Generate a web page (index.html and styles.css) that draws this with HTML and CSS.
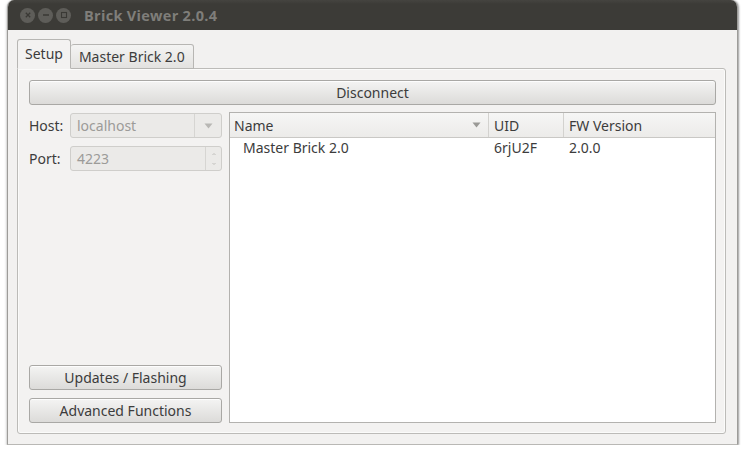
FILE: index.html
```html
<!DOCTYPE html>
<html>
<head>
<meta charset="utf-8">
<link rel="stylesheet" href="styles.css">
</head>
<body>
<div class="window">
  <div class="titlebar">
    <div class="wbtns">
      <span class="wbtn"><svg width="14" height="14" viewBox="0 0 14 14"><path d="M4.8 4.8 L9.2 9.2 M9.2 4.8 L4.8 9.2" stroke="#3a3935" stroke-width="1.3"/></svg></span>
      <span class="wbtn"><svg width="14" height="14" viewBox="0 0 14 14"><path d="M4 7 H10" stroke="#3a3935" stroke-width="1.3"/></svg></span>
      <span class="wbtn"><svg width="14" height="14" viewBox="0 0 14 14"><rect x="4.5" y="4.5" width="5" height="5" fill="none" stroke="#3a3935" stroke-width="1.1"/></svg></span>
    </div>
    <div class="title">Brick Viewer 2.0.4</div>
  </div>
  <div class="body">
    <div class="tabs">
      <div class="tab active">Setup</div>
      <div class="tab">Master Brick 2.0</div>
    </div>
    <div class="pane">
      <div class="btn wide">Disconnect</div>
      <div class="main">
        <div class="left">
          <div class="field">
            <span class="lbl">Host:</span>
            <div class="input combo"><span>localhost</span><span class="arrow"><svg width="9" height="6" viewBox="0 0 9 6"><path d="M0.5 0.5 H8.5 L4.5 5.5 Z" fill="#b8b7b4"/></svg></span></div>
          </div>
          <div class="field">
            <span class="lbl">Port:</span>
            <div class="input spin"><span>4223</span><span class="arrow2"><svg width="6" height="16" viewBox="0 0 6 16"><path d="M1.5 4 L3 2.5 L4.5 4" fill="none" stroke="#c0bfbc"/><path d="M1.5 12 L3 13.5 L4.5 12" fill="none" stroke="#c0bfbc"/></svg></span></div>
          </div>
          <div class="spacer"></div>
          <div class="btn">Updates / Flashing</div>
          <div class="btn">Advanced Functions</div>
        </div>
        <div class="tree">
          <div class="thead">
            <div class="th c1">Name<svg class="sort" width="9" height="6" viewBox="0 0 9 6"><path d="M0.5 0.5 H8.5 L4.5 5.5 Z" fill="#9a9996"/></svg></div>
            <div class="th c2">UID</div>
            <div class="th c3">FW Version</div>
          </div>
          <div class="trow">
            <div class="td c1 indent">Master Brick 2.0</div>
            <div class="td c2">6rjU2F</div>
            <div class="td c3">2.0.0</div>
          </div>
        </div>
      </div>
    </div>
  </div>
</div>
</body>
</html>
```
FILE: styles.css
```css
html, body {
  margin: 0;
  padding: 0;
  background: #ffffff;
}
body {
  font-family: "Noto Sans", "DejaVu Sans", sans-serif;
  font-size: 13px;
  color: #3c3c3c;
}
.window {
  margin-left: 7px;
  width: 731px;
  height: 445px;
  background: #f2f1f0;
  border-radius: 7px 7px 0 0;
  box-shadow: 0 1px 3px rgba(0,0,0,0.35), 1px 0 2px rgba(0,0,0,0.25);
  display: flex;
  flex-direction: column;
  overflow: hidden;
  box-sizing: border-box;
  border-left: 1px solid #9d9c99;
  border-right: 1px solid #9d9c99;
  border-bottom: 1px solid #b9b8b5;
}
.titlebar {
  height: 30px;
  flex: none;
  background: linear-gradient(#454440, #3c3b37 4px, #3c3b37);
  display: flex;
  align-items: center;
  padding-left: 12px;
}
.wbtns {
  display: flex;
  gap: 3px;
}
.wbtn {
  width: 15px;
  height: 15px;
  border-radius: 50%;
  background: #5e5d59;
  display: flex;
  align-items: center;
  justify-content: center;
}
.wbtn svg { display: block; }
.title {
  margin-left: 13px;
  font-family: "Open Sans", "Noto Sans", sans-serif;
  font-weight: 700;
  font-size: 14.5px;
  color: #7f7e7a;
  letter-spacing: 0.3px;
}
.body {
  flex: 1;
  display: flex;
  flex-direction: column;
  padding: 9px 11px 10px 9px;
  min-height: 0;
}
.tabs {
  display: flex;
  align-items: flex-end;
  height: 30px;
  flex: none;
  position: relative;
  z-index: 1;
  margin-bottom: -1px;
}
.tab {
  height: 25px;
  box-sizing: border-box;
  border: 1px solid #b7b6b3;
  border-bottom: 1px solid #b7b6b3;
  border-left: none;
  border-radius: 3px 3px 0 0;
  background: linear-gradient(#f4f4f3, #e3e2e0);
  padding: 0 8px 0 8px;
  display: flex;
  align-items: center;
  font-size: 14px;
}
.tab.active {
  height: 30px;
  border-left: 1px solid #b7b6b3;
  border-bottom-color: #f3f2f1;
  background: #f3f2f1;
  padding: 0 7px;
  padding-bottom: 1px;
}
.pane {
  flex: 1;
  border: 1px solid #bcbbb8;
  border-radius: 0 3px 3px 3px;
  background: #f3f2f1;
  padding: 11px 9px 10px 11px;
  display: flex;
  flex-direction: column;
  gap: 7px;
  min-height: 0;
  box-shadow: inset 0 0 0 1px #fbfbfa;
}
.btn {
  height: 25px;
  box-sizing: border-box;
  border: 1px solid #a9a8a5;
  border-radius: 3px;
  background: linear-gradient(#f4f4f3, #dcdbd9);
  display: flex;
  align-items: center;
  justify-content: center;
  font-size: 14px;
  color: #3c3c3c;
  flex: none;
  box-shadow: inset 0 1px 0 #fdfdfd;
}
.main {
  flex: 1;
  display: flex;
  gap: 7px;
  min-height: 0;
}
.left {
  width: 193px;
  flex: none;
  display: flex;
  flex-direction: column;
  gap: 8px;
}
.spacer { flex: 1; }
.field {
  display: flex;
  align-items: center;
  height: 25px;
  margin-top: 1px;
}
.field + .field { margin-top: 0; }
.lbl {
  width: 41px;
  font-size: 14px;
}
.input {
  flex: 1;
  height: 25px;
  box-sizing: border-box;
  border: 1px solid #cfcecb;
  border-radius: 3px;
  background: #ebeae8;
  color: #9c9b98;
  font-size: 14px;
  display: flex;
  align-items: center;
  padding-left: 6px;
}
.input span:first-child { flex: 1; }
.arrow {
  width: 26px;
  height: 100%;
  border-left: 1px solid #d6d5d2;
  display: flex;
  align-items: center;
  justify-content: center;
}
.arrow2 {
  width: 15px;
  height: 100%;
  border-left: 1px solid #d6d5d2;
  display: flex;
  align-items: center;
  justify-content: center;
}
.tree {
  flex: 1;
  border: 1px solid #b3b2af;
  background: #ffffff;
  display: flex;
  flex-direction: column;
}
.thead {
  display: flex;
  height: 24px;
  background: linear-gradient(#f6f6f5, #ecebe9);
  border-bottom: 1px solid #c9c8c5;
  flex: none;
}
.th {
  display: flex;
  align-items: center;
  padding-left: 4px;
  font-size: 14px;
  color: #3c3c3c;
  box-sizing: border-box;
  border-right: 1px solid #d3d2cf;
}
.th.c3 { border-right: none; }
.c1 { width: 259px; flex: none; box-sizing: border-box; }
.c2 { width: 75px; flex: none; box-sizing: border-box; }
.c3 { flex: 1; }
.th.c1 { justify-content: space-between; padding-right: 7px; }
.th.c2, .th.c3 { padding-left: 5px; }
.sort { display: block; }
.trow {
  display: flex;
  height: 19px;
  align-items: center;
  font-size: 14px;
}
.td { padding-left: 5px; }
.td.indent { padding-left: 13px; }
```
